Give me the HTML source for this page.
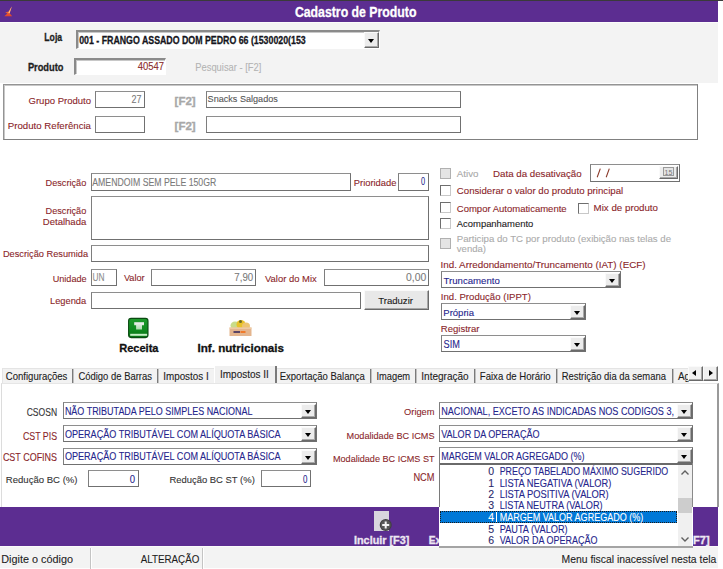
<!DOCTYPE html><html><head><meta charset="utf-8"><style>
html,body{margin:0;padding:0;}
body{width:723px;height:569px;position:relative;overflow:hidden;background:#fff;font-family:"Liberation Sans",sans-serif;}
.a{position:absolute;box-sizing:border-box;}
.fld{position:absolute;box-sizing:border-box;background:#fff;border:1px solid #707070;border-top-color:#8e8e8e;border-left-color:#7e7e7e;}
.sunk{position:absolute;box-sizing:border-box;background:#fff;border-top:2px solid #8a8a8a;border-left:2px solid #8a8a8a;border-right:1px solid #fff;border-bottom:1px solid #fff;box-shadow:inset 1px 1px 0 #c8c8c8;}
.btn{position:absolute;box-sizing:border-box;background:#ececec;border:1px solid #fafafa;border-right-color:#6a6a6a;border-bottom-color:#6a6a6a;box-shadow:inset -1px -1px 0 #a8a8a8;}
.arr{position:absolute;width:0;height:0;border-left:3.5px solid transparent;border-right:3.5px solid transparent;border-top:4px solid #000;}
.cb{position:absolute;box-sizing:border-box;width:11px;height:11px;background:#fff;border:1px solid #6e6e6e;border-right-color:#c8c8c8;border-bottom-color:#c8c8c8;}
.cbd{background:#e4e4e4;border-color:#b0b0b0;}
svg.txt{position:absolute;left:0;top:0;}
svg.txt text{font-family:"Liberation Sans",sans-serif;}
</style></head><body>
<div class="a" style="left:0px;top:0px;width:723px;height:1px;background:#3a3a3a;"></div>
<div class="a" style="left:0px;top:1px;width:718px;height:21px;background:#5c2d91;"></div>
<svg class="a" style="left:3px;top:5px" width="11" height="13" viewBox="0 0 11 13"><defs><linearGradient id="ic" x1="0" y1="0" x2="0" y2="1"><stop offset="0" stop-color="#f58a3a"/><stop offset="1" stop-color="#e2452a"/></linearGradient></defs><path d="M8.8 1.6 L5.6 6.6 L2.2 7.6 L4.4 8.4 L1.3 11.2 L9.2 11.2 L6.6 8.2 Z" fill="url(#ic)"/><path d="M8.8 1.6 L5.2 8 L6.6 8.2 Z" fill="#ffc08a"/></svg>
<div class="a" style="left:0px;top:22px;width:718px;height:61px;background:#f3f3f3;border-top:1px solid #fbfbfb;"></div>
<div class="sunk" style="left:76px;top:30px;width:304px;height:19px;"></div>
<div class="btn" style="left:364px;top:32px;width:15px;height:16px;"></div>
<div class="arr" style="left:368.0px;top:38.5px;"></div>
<div class="sunk" style="left:74px;top:58px;width:92px;height:17px;"></div>
<div class="a" style="left:3px;top:84px;width:695px;height:56px;border:1px solid #949494;border-bottom-color:#808080;border-right-color:#808080;box-shadow:inset 1px 1px 0 #c8c8c8;background:#fff;"></div>
<div class="fld" style="left:95px;top:91px;width:50px;height:17px;"></div>
<div class="fld" style="left:206px;top:91px;width:255px;height:17px;"></div>
<div class="fld" style="left:95px;top:116px;width:50px;height:17px;"></div>
<div class="fld" style="left:206px;top:116px;width:255px;height:17px;"></div>
<div class="fld" style="left:91px;top:173px;width:260px;height:18px;"></div>
<div class="fld" style="left:398px;top:173px;width:31px;height:18px;"></div>
<div class="fld" style="left:91px;top:196px;width:338px;height:44px;"></div>
<div class="fld" style="left:91px;top:245px;width:338px;height:17px;"></div>
<div class="fld" style="left:91px;top:269px;width:26px;height:17px;"></div>
<div class="fld" style="left:151px;top:269px;width:105px;height:17px;"></div>
<div class="fld" style="left:324px;top:269px;width:105px;height:17px;"></div>
<div class="fld" style="left:91px;top:292px;width:270px;height:17px;"></div>
<div class="btn" style="left:364px;top:290px;width:65px;height:20px;background:#e8e8e8;"></div>
<svg class="a" style="left:127px;top:317px" width="23" height="23" viewBox="0 0 23 23">
<defs><linearGradient id="g1" x1="0" y1="0" x2="0" y2="1"><stop offset="0" stop-color="#1f9a2c"/><stop offset="0.6" stop-color="#0f8a1e"/><stop offset="1" stop-color="#067012"/></linearGradient>
<linearGradient id="g2" x1="0" y1="0" x2="0" y2="1"><stop offset="0" stop-color="#f4f0f4"/><stop offset="1" stop-color="#a8dca8"/></linearGradient></defs>
<rect x="1.6" y="1.4" width="19.4" height="19.2" rx="2.5" fill="url(#g1)" stroke="#0a4a12" stroke-width="1.1"/>
<path d="M7.2 5.3 L17 5.3 L17 8.3 L15 8.3 L15 12.6 L9.1 12.6 L9.1 8.3 L7.2 8.3 Z" fill="url(#g2)"/>
<rect x="3.2" y="16.8" width="16.9" height="2" fill="#c4f0c4"/>
</svg>
<svg class="a" style="left:228px;top:319px" width="25" height="19" viewBox="0 0 25 19">
<ellipse cx="7" cy="6.5" rx="4.5" ry="4" fill="#c9dc8a"/>
<ellipse cx="13" cy="5.5" rx="4.5" ry="4.5" fill="#e8c22a"/>
<ellipse cx="18" cy="7" rx="4" ry="3.5" fill="#edc472"/>
<circle cx="12.5" cy="2.5" r="1.5" fill="#6b6a2a"/>
<rect x="1.5" y="8.5" width="22" height="8.5" fill="#e4b58e"/>
<rect x="1.5" y="8.5" width="22" height="1.3" fill="#f0cfa8"/>
<rect x="5.5" y="12" width="6.5" height="2" fill="#5b4566"/>
<rect x="12.5" y="12" width="5" height="2" fill="#f07a2a"/>
</svg>
<div class="cb cbd" style="left:440px;top:168px;"></div>
<div class="fld" style="left:590px;top:164px;width:90px;height:18px;"></div>
<div class="btn" style="left:659px;top:166px;width:19px;height:13px;background:#ececec;"></div>
<div class="a" style="left:663px;top:167px;width:11px;height:9px;border:1px solid #9a9a9a;background:#e4e4e4;"></div>
<div class="cb" style="left:440px;top:185px;"></div>
<div class="cb" style="left:440px;top:202px;"></div>
<div class="cb" style="left:578px;top:203px;"></div>
<div class="cb" style="left:440px;top:218px;"></div>
<div class="cb cbd" style="left:440px;top:238px;"></div>
<div class="fld" style="left:441px;top:271px;width:180px;height:17px;"></div>
<div class="btn" style="left:605px;top:273px;width:15px;height:14px;"></div>
<div class="arr" style="left:609.0px;top:278.5px;"></div>
<div class="fld" style="left:441px;top:303px;width:145px;height:17px;"></div>
<div class="btn" style="left:570px;top:305px;width:15px;height:14px;"></div>
<div class="arr" style="left:574.0px;top:310.5px;"></div>
<div class="fld" style="left:441px;top:335px;width:145px;height:17px;"></div>
<div class="btn" style="left:570px;top:337px;width:15px;height:14px;"></div>
<div class="arr" style="left:574.0px;top:342.5px;"></div>
<div class="a" style="left:2px;top:368px;width:687px;height:15px;background:#f2f2f2;border-top:1px solid #e4e4e4;border-left:1px solid #e4e4e4;"></div>
<div class="a" style="left:72px;top:369px;width:2px;height:14px;border-left:1px solid #7a7a7a;border-right:1px solid #c0c0c0;"></div>
<div class="a" style="left:157px;top:369px;width:2px;height:14px;border-left:1px solid #7a7a7a;border-right:1px solid #c0c0c0;"></div>
<div class="a" style="left:370px;top:369px;width:2px;height:14px;border-left:1px solid #7a7a7a;border-right:1px solid #c0c0c0;"></div>
<div class="a" style="left:415px;top:369px;width:2px;height:14px;border-left:1px solid #7a7a7a;border-right:1px solid #c0c0c0;"></div>
<div class="a" style="left:474px;top:369px;width:2px;height:14px;border-left:1px solid #7a7a7a;border-right:1px solid #c0c0c0;"></div>
<div class="a" style="left:556px;top:369px;width:2px;height:14px;border-left:1px solid #7a7a7a;border-right:1px solid #c0c0c0;"></div>
<div class="a" style="left:672px;top:369px;width:2px;height:14px;border-left:1px solid #7a7a7a;border-right:1px solid #c0c0c0;"></div>
<div class="a" style="left:214px;top:366px;width:63px;height:18px;background:#f0f0f0;border-left:1px solid #fff;border-right:2px solid #7a7a7a;"></div>
<div class="a" style="left:1px;top:383px;width:718px;height:124px;border-left:1px solid #dcdcdc;border-right:2px solid #9a9a9a;border-top:1px solid #e6e6e6;background:#fff;"></div>
<div class="fld" style="left:63px;top:402px;width:254px;height:17px;"></div>
<div class="btn" style="left:301px;top:404px;width:15px;height:14px;"></div>
<div class="arr" style="left:305.0px;top:409.5px;"></div>
<div class="fld" style="left:63px;top:425px;width:254px;height:17px;"></div>
<div class="btn" style="left:301px;top:427px;width:15px;height:14px;"></div>
<div class="arr" style="left:305.0px;top:432.5px;"></div>
<div class="fld" style="left:63px;top:448px;width:254px;height:17px;"></div>
<div class="btn" style="left:301px;top:450px;width:15px;height:14px;"></div>
<div class="arr" style="left:305.0px;top:455.5px;"></div>
<div class="fld" style="left:88px;top:470px;width:51px;height:17px;"></div>
<div class="fld" style="left:261px;top:470px;width:50px;height:17px;"></div>
<div class="fld" style="left:439px;top:402px;width:254px;height:17px;"></div>
<div class="btn" style="left:677px;top:404px;width:15px;height:14px;"></div>
<div class="arr" style="left:681.0px;top:409.5px;"></div>
<div class="fld" style="left:439px;top:425px;width:254px;height:17px;"></div>
<div class="btn" style="left:677px;top:427px;width:15px;height:14px;"></div>
<div class="arr" style="left:681.0px;top:432.5px;"></div>
<div class="fld" style="left:439px;top:447px;width:254px;height:17px;"></div>
<div class="btn" style="left:677px;top:449px;width:15px;height:14px;"></div>
<div class="arr" style="left:681.0px;top:454.5px;"></div>
<div class="a" style="left:0px;top:507px;width:718px;height:39px;background:#5c2d91;"></div>
<svg class="a" style="left:372px;top:509px" width="24" height="25" viewBox="0 0 24 25">
<rect x="2" y="2" width="15" height="20" fill="#d9d6de"/>
<circle cx="13.7" cy="16" r="6" fill="#3f3f3f"/>
<circle cx="13.7" cy="16" r="5" fill="#585858"/>
<rect x="12.7" y="12.5" width="2" height="7" fill="#f4f4f4"/>
<rect x="10.2" y="15" width="7" height="2" fill="#f4f4f4"/>
</svg>
<div class="a" style="left:0px;top:546px;width:718px;height:23px;background:#f3f3f3;border-top:1px solid #fafafa;border-bottom:1px solid #fdfdfd;"></div>
<div class="a" style="left:90px;top:548px;width:2px;height:21px;border-left:1px solid #c4c4c4;border-right:1px solid #fff;"></div>
<div class="a" style="left:202px;top:548px;width:2px;height:21px;border-left:1px solid #c4c4c4;border-right:1px solid #fff;"></div>
<svg class="txt" width="723" height="569" viewBox="0 0 723 569"><text x="294.90" y="17.20" font-size="15.00" fill="#fff" stroke="#fff" stroke-width="0.3" font-weight="bold" textLength="121.50" lengthAdjust="spacingAndGlyphs" >Cadastro de Produto</text><text x="44.30" y="40.80" font-size="11.30" fill="#1e1e1e" stroke="#1e1e1e" stroke-width="0.3" font-weight="bold" textLength="17.82" lengthAdjust="spacingAndGlyphs" >Loja</text><text x="27.90" y="71.00" font-size="11.30" fill="#1e1e1e" stroke="#1e1e1e" stroke-width="0.3" font-weight="bold" textLength="35.59" lengthAdjust="spacingAndGlyphs" >Produto</text><text x="79.20" y="44.20" font-size="11.60" fill="#151520" stroke="#151520" stroke-width="0.3" font-weight="bold" textLength="226.50" lengthAdjust="spacingAndGlyphs" >001 - FRANGO ASSADO DOM PEDRO 66 (1530020(153</text><text x="137.70" y="69.90" font-size="10.30" fill="#8a2a2a" stroke="#8a2a2a" stroke-width="0.1" textLength="26.30" lengthAdjust="spacingAndGlyphs" >40547</text><text x="195.30" y="70.80" font-size="11.50" fill="#b4b4b4" stroke="#b4b4b4" stroke-width="0.1" textLength="66.00" lengthAdjust="spacingAndGlyphs" >Pesquisar - [F2]</text><text x="28.50" y="103.60" font-size="9.80" fill="#8a1f2a" stroke="#8a1f2a" stroke-width="0.1" textLength="62.50" lengthAdjust="spacingAndGlyphs" >Grupo Produto</text><text x="131.60" y="102.80" font-size="10.30" fill="#7a7a7a" stroke="#7a7a7a" stroke-width="0.1" textLength="10.00" lengthAdjust="spacingAndGlyphs" >27</text><text x="174.60" y="104.60" font-size="10.30" fill="#a8a8a8" stroke="#a8a8a8" stroke-width="0.3" font-weight="bold" textLength="21.10" lengthAdjust="spacingAndGlyphs" >[F2]</text><text x="207.60" y="102.40" font-size="9.80" fill="#555" stroke="#555" stroke-width="0.1" textLength="70.20" lengthAdjust="spacingAndGlyphs" >Snacks Salgados</text><text x="7.80" y="128.50" font-size="9.80" fill="#8a1f2a" stroke="#8a1f2a" stroke-width="0.1" textLength="83.19" lengthAdjust="spacingAndGlyphs" >Produto Referência</text><text x="174.60" y="129.60" font-size="10.30" fill="#a8a8a8" stroke="#a8a8a8" stroke-width="0.3" font-weight="bold" textLength="21.10" lengthAdjust="spacingAndGlyphs" >[F2]</text><text x="45.60" y="186.10" font-size="9.80" fill="#8a1f2a" stroke="#8a1f2a" stroke-width="0.1" textLength="40.70" lengthAdjust="spacingAndGlyphs" >Descrição</text><text x="92.30" y="185.50" font-size="10.50" fill="#7a7a7a" stroke="#7a7a7a" stroke-width="0.1" textLength="124.00" lengthAdjust="spacingAndGlyphs" >AMENDOIM SEM PELE 150GR</text><text x="353.80" y="185.90" font-size="9.80" fill="#8a1f2a" stroke="#8a1f2a" stroke-width="0.1" textLength="42.60" lengthAdjust="spacingAndGlyphs" >Prioridade</text><text x="421.00" y="185.20" font-size="10.30" fill="#25258c" stroke="#25258c" stroke-width="0.1" textLength="4.10" lengthAdjust="spacingAndGlyphs" >0</text><text x="45.60" y="214.20" font-size="9.80" fill="#8a1f2a" stroke="#8a1f2a" stroke-width="0.1" textLength="40.70" lengthAdjust="spacingAndGlyphs" >Descrição</text><text x="42.80" y="225.30" font-size="9.80" fill="#8a1f2a" stroke="#8a1f2a" stroke-width="0.1" textLength="43.49" lengthAdjust="spacingAndGlyphs" >Detalhada</text><text x="2.90" y="256.60" font-size="9.80" fill="#8a1f2a" stroke="#8a1f2a" stroke-width="0.1" textLength="85.20" lengthAdjust="spacingAndGlyphs" >Descrição Resumida</text><text x="52.70" y="281.60" font-size="9.80" fill="#8a1f2a" stroke="#8a1f2a" stroke-width="0.1" textLength="33.90" lengthAdjust="spacingAndGlyphs" >Unidade</text><text x="92.60" y="280.80" font-size="10.30" fill="#8c8c8c" stroke="#8c8c8c" stroke-width="0.1" textLength="12.00" lengthAdjust="spacingAndGlyphs" >UN</text><text x="123.90" y="281.40" font-size="9.80" fill="#8a1f2a" stroke="#8a1f2a" stroke-width="0.1" textLength="20.70" lengthAdjust="spacingAndGlyphs" >Valor</text><text x="234.30" y="280.80" font-size="10.30" fill="#7a7a7a" stroke="#7a7a7a" stroke-width="0.1" textLength="18.90" lengthAdjust="spacingAndGlyphs" >7,90</text><text x="265.00" y="281.60" font-size="9.80" fill="#8a1f2a" stroke="#8a1f2a" stroke-width="0.1" textLength="51.70" lengthAdjust="spacingAndGlyphs" >Valor do Mix</text><text x="406.10" y="280.80" font-size="10.30" fill="#7a7a7a" stroke="#7a7a7a" stroke-width="0.1" textLength="20.20" lengthAdjust="spacingAndGlyphs" >0,00</text><text x="50.00" y="304.10" font-size="9.80" fill="#8a1f2a" stroke="#8a1f2a" stroke-width="0.1" textLength="36.19" lengthAdjust="spacingAndGlyphs" >Legenda</text><text x="378.20" y="304.30" font-size="9.80" fill="#1a1a1a" stroke="#1a1a1a" stroke-width="0.1" textLength="34.80" lengthAdjust="spacingAndGlyphs" >Traduzir</text><text x="119.20" y="352.10" font-size="11.20" fill="#111" stroke="#111" stroke-width="0.3" font-weight="bold" textLength="39.33" lengthAdjust="spacingAndGlyphs" >Receita</text><text x="197.50" y="352.10" font-size="11.20" fill="#111" stroke="#111" stroke-width="0.3" font-weight="bold" textLength="86.50" lengthAdjust="spacingAndGlyphs" >Inf. nutricionais</text><text x="456.80" y="177.00" font-size="9.80" fill="#a8a8a8" stroke="#a8a8a8" stroke-width="0.1" textLength="21.70" lengthAdjust="spacingAndGlyphs" >Ativo</text><text x="493.00" y="177.00" font-size="9.80" fill="#8a1f2a" stroke="#8a1f2a" stroke-width="0.1" textLength="88.70" lengthAdjust="spacingAndGlyphs" >Data da desativação</text><path d="M597.2 177.3 L600.3 168.6 M606.2 177.3 L609.3 168.6" stroke="#8a3a2a" stroke-width="1.1" fill="none"/><text x="664.5" y="175" font-size="7" fill="#777">15</text><text x="456.80" y="193.60" font-size="9.80" fill="#8a1f2a" stroke="#8a1f2a" stroke-width="0.1" textLength="166.40" lengthAdjust="spacingAndGlyphs" >Considerar o valor do produto principal</text><text x="456.80" y="211.60" font-size="9.80" fill="#8a1f2a" stroke="#8a1f2a" stroke-width="0.1" textLength="109.80" lengthAdjust="spacingAndGlyphs" >Compor Automaticamente</text><text x="593.60" y="211.30" font-size="9.80" fill="#8a1f2a" stroke="#8a1f2a" stroke-width="0.1" textLength="64.40" lengthAdjust="spacingAndGlyphs" >Mix de produto</text><text x="456.80" y="227.40" font-size="9.80" fill="#1a1a1a" stroke="#1a1a1a" stroke-width="0.1" textLength="76.50" lengthAdjust="spacingAndGlyphs" >Acompanhamento</text><text x="456.80" y="241.90" font-size="9.80" fill="#ababab" stroke="#ababab" stroke-width="0.1" textLength="214.20" lengthAdjust="spacingAndGlyphs" >Participa do TC por produto (exibição nas telas de</text><text x="456.80" y="252.40" font-size="9.80" fill="#ababab" stroke="#ababab" stroke-width="0.1" textLength="29.20" lengthAdjust="spacingAndGlyphs" >venda)</text><text x="440.50" y="267.80" font-size="9.80" fill="#8a1f2a" stroke="#8a1f2a" stroke-width="0.1" textLength="205.10" lengthAdjust="spacingAndGlyphs" >Ind. Arredondamento/Truncamento (IAT) (ECF)</text><text x="443.50" y="283.90" font-size="9.80" fill="#25258c" stroke="#25258c" stroke-width="0.1" textLength="56.30" lengthAdjust="spacingAndGlyphs" >Truncamento</text><text x="440.80" y="300.40" font-size="9.80" fill="#8a1f2a" stroke="#8a1f2a" stroke-width="0.1" textLength="90.10" lengthAdjust="spacingAndGlyphs" >Ind. Produção (IPPT)</text><text x="443.30" y="316.20" font-size="9.80" fill="#25258c" stroke="#25258c" stroke-width="0.1" textLength="30.69" lengthAdjust="spacingAndGlyphs" >Própria</text><text x="440.80" y="331.50" font-size="9.80" fill="#8a1f2a" stroke="#8a1f2a" stroke-width="0.1" textLength="38.70" lengthAdjust="spacingAndGlyphs" >Registrar</text><text x="443.60" y="347.80" font-size="10.30" fill="#25258c" stroke="#25258c" stroke-width="0.1" textLength="16.30" lengthAdjust="spacingAndGlyphs" >SIM</text><text x="5.80" y="379.60" font-size="10.20" fill="#1c1c1c" stroke="#1c1c1c" stroke-width="0.1" textLength="61.60" lengthAdjust="spacingAndGlyphs" >Configurações</text><text x="78.40" y="379.60" font-size="10.20" fill="#1c1c1c" stroke="#1c1c1c" stroke-width="0.1" textLength="73.60" lengthAdjust="spacingAndGlyphs" >Código de Barras</text><text x="163.20" y="379.60" font-size="10.20" fill="#1c1c1c" stroke="#1c1c1c" stroke-width="0.1" textLength="45.50" lengthAdjust="spacingAndGlyphs" >Impostos I</text><text x="279.70" y="379.60" font-size="10.20" fill="#1c1c1c" stroke="#1c1c1c" stroke-width="0.1" textLength="85.19" lengthAdjust="spacingAndGlyphs" >Exportação Balança</text><text x="376.50" y="379.60" font-size="10.20" fill="#1c1c1c" stroke="#1c1c1c" stroke-width="0.1" textLength="33.60" lengthAdjust="spacingAndGlyphs" >Imagem</text><text x="421.30" y="379.60" font-size="10.20" fill="#1c1c1c" stroke="#1c1c1c" stroke-width="0.1" textLength="47.40" lengthAdjust="spacingAndGlyphs" >Integração</text><text x="479.80" y="379.60" font-size="10.20" fill="#1c1c1c" stroke="#1c1c1c" stroke-width="0.1" textLength="70.90" lengthAdjust="spacingAndGlyphs" >Faixa de Horário</text><text x="561.70" y="379.60" font-size="10.20" fill="#1c1c1c" stroke="#1c1c1c" stroke-width="0.1" textLength="104.20" lengthAdjust="spacingAndGlyphs" >Restrição dia da semana</text><text x="677.90" y="379.60" font-size="10.20" fill="#1c1c1c" stroke="#1c1c1c" stroke-width="0.1" textLength="34.09" lengthAdjust="spacingAndGlyphs" >Agenda</text><text x="220.00" y="377.90" font-size="10.20" fill="#1c1c1c" stroke="#1c1c1c" stroke-width="0.1" textLength="48.80" lengthAdjust="spacingAndGlyphs" >Impostos II</text><text x="26.70" y="415.90" font-size="10.30" fill="#333" stroke="#333" stroke-width="0.1" textLength="30.40" lengthAdjust="spacingAndGlyphs" >CSOSN</text><text x="64.90" y="415.10" font-size="10.50" fill="#25258c" stroke="#25258c" stroke-width="0.1" textLength="187.60" lengthAdjust="spacingAndGlyphs" >NÃO TRIBUTADA PELO SIMPLES NACIONAL</text><text x="22.90" y="440.10" font-size="10.30" fill="#8a1f2a" stroke="#8a1f2a" stroke-width="0.1" textLength="34.20" lengthAdjust="spacingAndGlyphs" >CST PIS</text><text x="64.90" y="437.60" font-size="10.50" fill="#25258c" stroke="#25258c" stroke-width="0.1" textLength="215.70" lengthAdjust="spacingAndGlyphs" >OPERAÇÃO TRIBUTÁVEL COM ALÍQUOTA BÁSICA</text><text x="2.90" y="461.00" font-size="10.30" fill="#8a1f2a" stroke="#8a1f2a" stroke-width="0.1" textLength="54.20" lengthAdjust="spacingAndGlyphs" >CST COFINS</text><text x="64.90" y="460.40" font-size="10.50" fill="#25258c" stroke="#25258c" stroke-width="0.1" textLength="215.70" lengthAdjust="spacingAndGlyphs" >OPERAÇÃO TRIBUTÁVEL COM ALÍQUOTA BÁSICA</text><text x="5.80" y="482.50" font-size="9.80" fill="#333" stroke="#333" stroke-width="0.1" textLength="71.70" lengthAdjust="spacingAndGlyphs" >Redução BC (%)</text><text x="129.70" y="482.50" font-size="10.30" fill="#25258c" stroke="#25258c" stroke-width="0.1" textLength="5.30" lengthAdjust="spacingAndGlyphs" >0</text><text x="169.40" y="482.60" font-size="9.80" fill="#333" stroke="#333" stroke-width="0.1" textLength="85.40" lengthAdjust="spacingAndGlyphs" >Redução BC ST (%)</text><text x="303.00" y="482.50" font-size="10.30" fill="#25258c" stroke="#25258c" stroke-width="0.1" textLength="4.40" lengthAdjust="spacingAndGlyphs" >0</text><text x="404.10" y="414.90" font-size="9.80" fill="#8a1f2a" stroke="#8a1f2a" stroke-width="0.1" textLength="30.40" lengthAdjust="spacingAndGlyphs" >Origem</text><text x="441.20" y="414.90" font-size="10.50" fill="#25258c" stroke="#25258c" stroke-width="0.1" textLength="232.80" lengthAdjust="spacingAndGlyphs" >NACIONAL, EXCETO AS INDICADAS NOS CODIGOS 3,</text><text x="346.60" y="439.30" font-size="9.80" fill="#8a1f2a" stroke="#8a1f2a" stroke-width="0.1" textLength="87.90" lengthAdjust="spacingAndGlyphs" >Modalidade BC ICMS</text><text x="441.20" y="437.80" font-size="10.50" fill="#25258c" stroke="#25258c" stroke-width="0.1" textLength="98.30" lengthAdjust="spacingAndGlyphs" >VALOR DA OPERAÇÃO</text><text x="333.00" y="462.00" font-size="9.80" fill="#8a1f2a" stroke="#8a1f2a" stroke-width="0.1" textLength="101.50" lengthAdjust="spacingAndGlyphs" >Modalidade BC ICMS ST</text><text x="441.20" y="460.20" font-size="10.50" fill="#25258c" stroke="#25258c" stroke-width="0.1" textLength="143.40" lengthAdjust="spacingAndGlyphs" >MARGEM VALOR AGREGADO (%)</text><text x="413.40" y="481.40" font-size="10.30" fill="#8a1f2a" stroke="#8a1f2a" stroke-width="0.1" textLength="21.10" lengthAdjust="spacingAndGlyphs" >NCM</text><text x="354.00" y="543.90" font-size="10.30" fill="#ece6f2" stroke="#ece6f2" stroke-width="0.3" font-weight="bold" textLength="55.30" lengthAdjust="spacingAndGlyphs" >Incluir [F3]</text><text x="428.70" y="543.90" font-size="10.30" fill="#ece6f2" stroke="#ece6f2" stroke-width="0.3" font-weight="bold" textLength="55.30" lengthAdjust="spacingAndGlyphs" >Excluir [F4]</text><text x="693.00" y="543.90" font-size="10.30" fill="#ece6f2" stroke="#ece6f2" stroke-width="0.3" font-weight="bold" textLength="16.60" lengthAdjust="spacingAndGlyphs" >F7]</text><text x="1.30" y="563.20" font-size="11.20" fill="#1e1e1e" stroke="#1e1e1e" stroke-width="0.1" textLength="71.70" lengthAdjust="spacingAndGlyphs" >Digite o código</text><text x="140.70" y="562.60" font-size="11.20" fill="#1e1e1e" stroke="#1e1e1e" stroke-width="0.1" textLength="58.60" lengthAdjust="spacingAndGlyphs" >ALTERAÇÃO</text><text x="561.50" y="563.20" font-size="11.20" fill="#1e1e1e" stroke="#1e1e1e" stroke-width="0.1" textLength="154.79" lengthAdjust="spacingAndGlyphs" >Menu fiscal inacessível nesta tela</text></svg>
<div class="a" style="left:0;top:0;width:723px;height:569px;"><div class="a" style="left:688px;top:366px;width:30px;height:15px;background:#fff;"></div><div class="btn" style="left:688px;top:366px;width:15px;height:15px;background:#f0f0f0;"></div><div class="btn" style="left:703px;top:366px;width:15px;height:15px;background:#f0f0f0;"></div><div class="a" style="left:692px;top:370px;width:0;height:0;border-top:3.5px solid transparent;border-bottom:3.5px solid transparent;border-right:4.5px solid #000;"></div><div class="a" style="left:709px;top:370px;width:0;height:0;border-top:3.5px solid transparent;border-bottom:3.5px solid transparent;border-left:4.5px solid #000;"></div><div class="a" style="left:439px;top:463px;width:254px;height:85px;background:#fff;border-top:2px solid #6a6a6a;border-bottom:2px solid #a4a4a4;"></div><div class="a" style="left:439px;top:463px;width:1px;height:44px;background:#7a7a7a;"></div><div class="a" style="left:692px;top:463px;width:1px;height:44px;background:#8a8a8a;"></div><div class="a" style="left:678px;top:465px;width:14px;height:81px;background:#f0f0f0;"></div><div class="a" style="left:678px;top:498px;width:14px;height:15px;background:#cdcdcd;"></div><svg class="a" style="left:680px;top:468px" width="10" height="9"><path d="M1.5 6.5 L5 3 L8.5 6.5" stroke="#606060" stroke-width="1.4" fill="none"/></svg><svg class="a" style="left:680px;top:535px" width="10" height="9"><path d="M1.5 2.5 L5 6 L8.5 2.5" stroke="#606060" stroke-width="1.4" fill="none"/></svg><div class="a" style="left:440px;top:511px;width:237px;height:12px;background:#0078d7;border:1px dotted #1a1a1a;"></div><div class="a" style="left:496px;top:512px;width:1px;height:10px;background:#fff;"></div><svg class="txt" width="723" height="569"><text x="499.70" y="475.1" font-size="10.5" fill="#25258c" stroke="#25258c" stroke-width="0.1" textLength="168.50" lengthAdjust="spacingAndGlyphs">PREÇO TABELADO MÁXIMO SUGERIDO</text><text x="494.2" y="475.1" font-size="10.5" fill="#2a2a6a" stroke="#2a2a6a" stroke-width="0.1" text-anchor="end">0</text><text x="499.70" y="486.7" font-size="10.5" fill="#25258c" stroke="#25258c" stroke-width="0.1" textLength="111.60" lengthAdjust="spacingAndGlyphs">LISTA NEGATIVA (VALOR)</text><text x="494.2" y="486.7" font-size="10.5" fill="#2a2a6a" stroke="#2a2a6a" stroke-width="0.1" text-anchor="end">1</text><text x="499.70" y="497.9" font-size="10.5" fill="#25258c" stroke="#25258c" stroke-width="0.1" textLength="109.00" lengthAdjust="spacingAndGlyphs">LISTA POSITIVA (VALOR)</text><text x="494.2" y="497.9" font-size="10.5" fill="#2a2a6a" stroke="#2a2a6a" stroke-width="0.1" text-anchor="end">2</text><text x="499.70" y="509.3" font-size="10.5" fill="#25258c" stroke="#25258c" stroke-width="0.1" textLength="102.90" lengthAdjust="spacingAndGlyphs">LISTA NEUTRA (VALOR)</text><text x="494.2" y="509.3" font-size="10.5" fill="#2a2a6a" stroke="#2a2a6a" stroke-width="0.1" text-anchor="end">3</text><text x="499.70" y="521.0" font-size="10.5" fill="#fff" stroke="#fff" stroke-width="0.1" textLength="143.50" lengthAdjust="spacingAndGlyphs">MARGEM VALOR AGREGADO (%)</text><text x="494.2" y="521.0" font-size="10.5" fill="#fff" stroke="#fff" stroke-width="0.1" text-anchor="end">4</text><text x="499.70" y="532.6" font-size="10.5" fill="#25258c" stroke="#25258c" stroke-width="0.1" textLength="68.00" lengthAdjust="spacingAndGlyphs">PAUTA (VALOR)</text><text x="494.2" y="532.6" font-size="10.5" fill="#2a2a6a" stroke="#2a2a6a" stroke-width="0.1" text-anchor="end">5</text><text x="499.70" y="544.2" font-size="10.5" fill="#25258c" stroke="#25258c" stroke-width="0.1" textLength="97.90" lengthAdjust="spacingAndGlyphs">VALOR DA OPERAÇÃO</text><text x="494.2" y="544.2" font-size="10.5" fill="#2a2a6a" stroke="#2a2a6a" stroke-width="0.1" text-anchor="end">6</text></svg></div>
</body></html>
